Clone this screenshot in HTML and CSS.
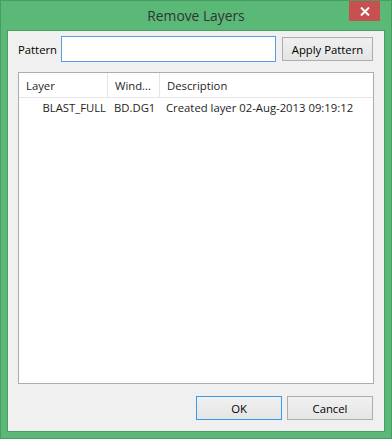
FILE: index.html
```html
<!DOCTYPE html>
<html lang="en">
<head>
    <meta charset="UTF-8">
    <title>Remove Layers</title>
    <link rel="stylesheet" href="styles.css">
</head>
<body>
    <div class="window">
        <div class="titlebar">
            <span class="title">Remove Layers</span>
            <div class="close">
                <svg width="10" height="9" viewBox="0 0 10 9">
                    <path d="M1 0.5 L9 8.5 M9 0.5 L1 8.5" stroke="#fff" stroke-width="2"/>
                </svg>
            </div>
        </div>
        <div class="frame">
            <div class="pattern-row">
                <label class="label">Pattern</label>
                <input class="pattern-input" type="text">
                <button class="btn apply">Apply Pattern</button>
            </div>

            <div class="listbox">
                <div class="list-head">
                    <div class="col c1">Layer</div>
                    <div class="col c2">Wind...</div>
                    <div class="col c3">Description</div>
                </div>
                <div class="list-row">
                    <div class="cell c1">BLAST_FULL</div>
                    <div class="cell c2">BD.DG1</div>
                    <div class="cell c3">Created layer 02-Aug-2013 09:19:12</div>
                </div>
            </div>

            <div class="actions">
                <button class="btn ok">OK</button>
                <button class="btn">Cancel</button>
            </div>
        </div>
    </div>
</body>
</html>
```

FILE: styles.css
```css
body {
    margin: 0;
    font-family: "Open Sans", "Noto Sans", sans-serif;
    font-size: 11.3px;
    color: #000;
}
.window {
    width: 392px;
    height: 439px;
    box-sizing: border-box;
    background-color: #5bb977;
    border: 1px solid #4b9c64;
    padding: 0 6px 6px 6px;
}
.titlebar {
    height: 29px;
    position: relative;
    text-align: center;
}
.title {
    font-size: 13.8px;
    line-height: 30px;
    color: #333;
}
.close {
    position: absolute;
    top: 0;
    right: 5px;
    width: 31px;
    height: 20px;
    background-color: #c75050;
    display: flex;
    align-items: center;
    justify-content: center;
}
.frame {
    height: 402px;
    box-sizing: border-box;
    border: 1px solid #4b9c64;
    background-color: #f0f0f0;
    padding: 5px 10px 0 10px;
}
.pattern-row {
    display: flex;
    align-items: center;
    height: 26px;
}
.label {
    width: 43px;
}
.pattern-input {
    width: 215px;
    height: 26px;
    box-sizing: border-box;
    border: 1px solid #569de5;
    margin: 0;
    padding: 0 4px;
    background: #fff;
    outline: none;
}
.btn {
    font-family: inherit;
    font-size: 11.3px;
    color: #000;
    height: 24px;
    box-sizing: border-box;
    border: 1px solid #adadad;
    background: linear-gradient(#f0f0f0, #e5e5e5);
    margin: 0;
    padding: 0;
}
.apply {
    width: 91px;
    margin-left: 6px;
}
.listbox {
    margin-top: 10px;
    height: 312px;
    box-sizing: border-box;
    border: 1px solid #adadad;
    background-color: #fff;
}
.list-head, .list-row {
    display: grid;
    grid-template-columns: 89px 52px 1fr;
}
.list-head {
    height: 24px;
    border-bottom: 1px solid #e5e5e5;
}
.col {
    line-height: 25px;
    padding-left: 7px;
    border-right: 1px solid #e5e5e5;
    color: #1e1e1e;
}
.col.c3 {
    border-right: none;
}
.list-row {
    height: 18px;
    line-height: 19px;
    color: #1e1e1e;
}
.cell {
    padding-left: 6px;
    white-space: nowrap;
}
.cell.c1 {
    text-align: right;
    padding-left: 0;
    padding-right: 2px;
}
.actions {
    display: flex;
    justify-content: flex-end;
    gap: 5px;
    margin-top: 12px;
    padding-right: 1px;
}
.actions .btn {
    width: 86px;
}
.ok {
    border-color: #3c9be8;
}
```
